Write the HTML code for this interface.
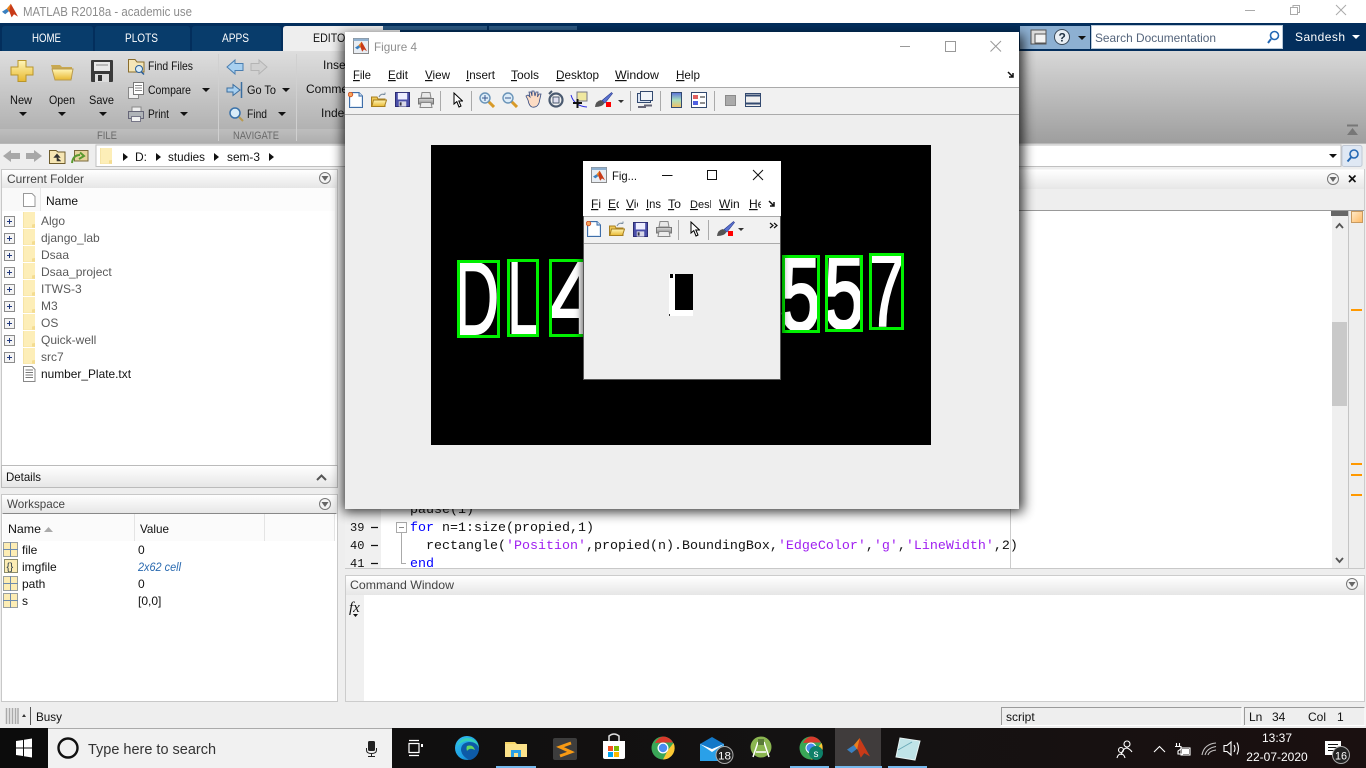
<!DOCTYPE html>
<html><head><meta charset="utf-8"><title>MATLAB R2018a</title>
<style>
html,body{margin:0;padding:0;width:1366px;height:768px;overflow:hidden;background:#eee}
svg{display:block}
text{font-family:"Liberation Sans",sans-serif;font-size:12px;fill:#111;white-space:pre}
.g{fill:#5a5a5a}.m{font-family:"Liberation Mono",monospace;font-size:13.33px}
.k{fill:#0000ff}.s{fill:#a020f0}.w{fill:#fff}
.u{text-decoration:underline}
.d{font-size:104px;fill:#fff;stroke:#fff;stroke-width:2}
</style></head><body>
<svg width="1366" height="768" viewBox="0 0 1366 768" xmlns="http://www.w3.org/2000/svg">
<defs>
<linearGradient id="rb" x1="0" y1="0" x2="0" y2="1"><stop offset="0" stop-color="#d8d8d8"/><stop offset="1" stop-color="#9e9e9e"/></linearGradient>
<linearGradient id="rl" x1="0" y1="0" x2="0" y2="1"><stop offset="0" stop-color="#dedede"/><stop offset="1" stop-color="#b2b2b2"/></linearGradient>
<linearGradient id="rs" x1="0" y1="0" x2="0" y2="1"><stop offset="0" stop-color="#bebebe"/><stop offset="1" stop-color="#aeaeae"/></linearGradient>
<linearGradient id="hd" x1="0" y1="0" x2="0" y2="1"><stop offset="0" stop-color="#fff"/><stop offset="1" stop-color="#e6e6e6"/></linearGradient>
<linearGradient id="tb" x1="0" y1="0" x2="1" y2="0"><stop offset="0" stop-color="#0c0c0c"/><stop offset=".6" stop-color="#141212"/><stop offset="1" stop-color="#1a1010"/></linearGradient>
<linearGradient id="yl" x1="0" y1="0" x2="0" y2="1"><stop offset="0" stop-color="#fff6b8"/><stop offset="1" stop-color="#e8b830"/></linearGradient>
<linearGradient id="or" x1="0" y1="0" x2="1" y2="1"><stop offset="0" stop-color="#ffeccc"/><stop offset="1" stop-color="#ffb860"/></linearGradient>
<linearGradient id="cb" x1="0" y1="0" x2="0" y2="1"><stop offset="0" stop-color="#5a70d8"/><stop offset=".5" stop-color="#a8e0c0"/><stop offset="1" stop-color="#f4c060"/></linearGradient>
<linearGradient id="ed" x1="0" y1="0" x2="1" y2="1"><stop offset="0" stop-color="#35c1f1"/><stop offset=".6" stop-color="#1b9de2"/><stop offset="1" stop-color="#0c59a4"/></linearGradient>
<linearGradient id="gp" x1="0" y1="0" x2="0" y2="1"><stop offset="0" stop-color="#d8d8d8"/><stop offset="1" stop-color="#8a8a8a"/></linearGradient>
<filter id="sh" x="-5%" y="-5%" width="110%" height="110%"><feGaussianBlur stdDeviation="6"/></filter>
<filter id="sh2" x="-10%" y="-10%" width="120%" height="120%"><feGaussianBlur stdDeviation="3.5"/></filter>

<symbol id="ml" viewBox="0 0 20 20"><polygon points="0,11 6,7 9,10 4,14" fill="#3a80c0"/><polygon points="6,7 11,1 13,6 9,11" fill="#e8801e"/><polygon points="11,1 15,8 20,17 15,14 12,18 9,10" fill="#c83a18"/></symbol>
<symbol id="fi" viewBox="0 0 16 16"><rect x=".5" y=".5" width="15" height="15" fill="#e8edf3" stroke="#8a8a8a"/><rect x=".5" y=".5" width="15" height="2.5" fill="#8fb0d0"/><use href="#ml" x="2" y="3" width="12" height="12"/></symbol>
<symbol id="pf" viewBox="0 0 12 16"><path d="M0 0H12V16H0Z" fill="#fdeeb8"/><path d="M9 16V12.5L12 12V16" fill="#f4dc90"/><path d="M.5 0V16H11.5" fill="none" stroke="#f6e4a6"/></symbol>
<symbol id="pl" viewBox="0 0 11 11"><rect x=".5" y=".5" width="10" height="10" fill="#f4f4f4" stroke="#8c8c8c"/><path d="M3 5.5H8M5.5 3V8" stroke="#223a80"/></symbol>
<symbol id="gd" viewBox="0 0 15 15"><rect x=".5" y=".5" width="14" height="14" fill="#fdedb4" stroke="#9aa0a0"/><path d="M7.5 0V15M0 7.5H15" stroke="#6e8cae"/></symbol>
<symbol id="pg" viewBox="0 0 16 16"><path d="M1.5 .5H11L14.5 4V15.5H1.5Z" fill="#dce9f7" stroke="#3f6ea8"/><path d="M3 2H10.500V5H13V14H3Z" fill="#fff"/><path d="M11 .5V4H14.5" fill="#cfe0f2" stroke="#3f6ea8"/><circle cx="2.5" cy="2.5" r="2.2" fill="#f5a55a" stroke="#d0552a"/></symbol>
<symbol id="op" viewBox="0 0 16 16"><path d="M.5 5H6L7 7H14V14.5H.5Z" fill="#eec755" stroke="#a77f20"/><path d="M.8 14.5L2.500 8H15.5L13.5 14.5Z" fill="url(#yl)" stroke="#a77f20"/><path d="M8 5Q10 1 14 2.500M14 2.500V.5M14 2.500H11.800" fill="none" stroke="#7a8ea0"/></symbol>
<symbol id="sv" viewBox="0 0 16 16"><rect x=".5" y=".5" width="15" height="15" fill="#4a4fa8" stroke="#2a2a70"/><rect x="3" y="1" width="10" height="7" fill="#eef"/><rect x="4" y="10" width="8" height="5.5" fill="#d8d8e8"/><rect x="5" y="11" width="2" height="3.5" fill="#334"/></symbol>
<symbol id="pr" viewBox="0 0 16 16"><path d="M4 .5H12L13 6H3Z" fill="#e8e8e8" stroke="#8a8a8a"/><path d="M.5 6.500H15.500V12H.5Z" fill="url(#gp)" stroke="#777"/><path d="M3 10.500H13L14 15.500H2Z" fill="#ececec" stroke="#888"/></symbol>
<symbol id="cu" viewBox="0 0 10 16"><path d="M1 1V12L3.8 9.6L6 15L8 14L5.8 9H9.5Z" fill="#fff" stroke="#000"/></symbol>
<symbol id="mg" viewBox="0 0 16 16"><path d="M9.5 9.5L15 15" stroke="#d89a28" stroke-width="3"/><circle cx="6" cy="6" r="5" fill="#dcecf8" stroke="#6a94b8" stroke-width="1.4"/></symbol>
<symbol id="br" viewBox="0 0 20 16"><path d="M8 8.500L17.500 .5L18.500 1.500L11 11Z" fill="#5a72d0" stroke="#28388a" stroke-width=".6"/><path d="M1 15Q1.500 9 7 8L10.500 11Q8.500 15 1 15Z" fill="#555"/><rect x="12" y="10" width="5" height="5" fill="#f00"/></symbol>
</defs>

<!-- background -->
<rect width="1366" height="768" fill="#eee"/>
<rect width="1366" height="23" fill="#fff"/>
<use href="#ml" x="2" y="3" width="16" height="16"/>
<text x="23" y="16" style="font-size:13px;fill:#8c8c8c" textLength="169" lengthAdjust="spacingAndGlyphs">MATLAB R2018a - academic use</text>
<path d="M1245 10.5H1255" stroke="#aaa"/><path d="M1290.5 7.5H1297.5V14.5H1290.5ZM1293 7.5V5.5H1299.5V12.5H1297.5" fill="none" stroke="#aaa"/><path d="M1336 5L1346 15M1346 5L1336 15" stroke="#aaa"/>

<!-- tab bar -->
<rect y="23" width="1366" height="28" fill="#032e5c"/>
<path d="M2 51V29Q2 26 5 26H90Q93 26 93 29V51Z" fill="#083c6b"/>
<path d="M95 51V29Q95 26 98 26H187Q190 26 190 29V51Z" fill="#083c6b"/>
<path d="M192 51V29Q192 26 195 26H278Q281 26 281 29V51Z" fill="#083c6b"/>
<path d="M283 51V29Q283 26 286 26H400V51Z" fill="#eee"/>
<path d="M383 26H487V30H383ZM489 26H577V30H489Z" fill="#2c5a84"/>
<text x="32" y="42" class="w" textLength="29" lengthAdjust="spacingAndGlyphs">HOME</text><text x="125" y="42" class="w" textLength="33" lengthAdjust="spacingAndGlyphs">PLOTS</text><text x="222" y="42" class="w" textLength="27" lengthAdjust="spacingAndGlyphs">APPS</text><text x="313" y="42" textLength="40" lengthAdjust="spacingAndGlyphs">EDITOR</text>
<rect x="1020" y="26" width="70" height="23" fill="#8db0d2"/>
<rect x="1031" y="30" width="15" height="14" fill="#ddd" stroke="#555"/><rect x="1035" y="34" width="11" height="9" fill="#f4f4f4" stroke="#555"/>
<circle cx="1062" cy="37" r="7.5" fill="#e8eef4" stroke="#3a4a5a"/><text x="1058.5" y="41.5" style="font-size:12px;font-weight:bold;fill:#234">?</text>
<polygon points="1078,36 1086,36 1082,40" fill="#111"/>
<rect x="1091.5" y="25.5" width="191" height="23" fill="#fff" stroke="#b8c8d8"/>
<text x="1095" y="42" style="fill:#55657c" textLength="121" lengthAdjust="spacingAndGlyphs">Search Documentation</text>
<circle cx="1274.5" cy="35.5" r="4" fill="none" stroke="#2468b4" stroke-width="1.6"/><path d="M1271 39L1268 43" stroke="#2468b4" stroke-width="2"/>
<text x="1295" y="41" class="w" textLength="50" lengthAdjust="spacing">Sandesh</text><polygon points="1352,35 1360,35 1356,39" fill="#fff"/>

<!-- ribbon -->
<rect y="51" width="1366" height="92" fill="url(#rb)"/>
<rect y="51" width="345" height="78" fill="url(#rl)"/>
<rect y="129" width="345" height="14" fill="url(#rs)"/>
<path d="M218.500 54V141M296.500 54V141" stroke="#d0d0d0"/>
<text x="97" y="139" style="font-size:11px;fill:#6a6a6a" textLength="20" lengthAdjust="spacingAndGlyphs">FILE</text><text x="233" y="139" style="font-size:11px;fill:#6a6a6a" textLength="46" lengthAdjust="spacingAndGlyphs">NAVIGATE</text>
<!-- new -->
<path d="M18 60.500H26V67H33V75H26V81.500H18V75H11V67H18Z" fill="url(#yl)" stroke="#b8952a"/>
<text x="10" y="104" textLength="22" lengthAdjust="spacingAndGlyphs">New</text><polygon points="19,112 27,112 23,116" fill="#111"/>
<!-- open -->
<path d="M51 65H60L62 67H72V79H55Z" fill="#c8a850"/><path d="M52 69H73L71 80H55Z" fill="url(#yl)" stroke="#b89a50"/>
<text x="49" y="104" textLength="26" lengthAdjust="spacingAndGlyphs">Open</text><polygon points="58,112 66,112 62,116" fill="#111"/>
<!-- save -->
<rect x="91" y="60" width="22" height="22" rx="1" fill="#3a3a3a"/><rect x="94" y="62" width="16" height="9" fill="#e8e8e8"/><path d="M96 65H108" stroke="#888"/><rect x="95" y="74" width="14" height="8" fill="#ddd"/><rect x="98" y="75" width="4" height="6" fill="#333"/>
<text x="89" y="104" textLength="25" lengthAdjust="spacingAndGlyphs">Save</text><polygon points="99,112 107,112 103,116" fill="#111"/>
<!-- find files -->
<path d="M128.500 59.500H135L137 62H144V72H128.500Z" fill="#f4e6b8" stroke="#8a6d2c"/><circle cx="139" cy="69" r="3.500" fill="#d8ecf8" stroke="#2a5e98"/><path d="M141.500 72L144 74.500" stroke="#2a5e98" stroke-width="1.500"/>
<text x="148" y="70" textLength="45" lengthAdjust="spacingAndGlyphs">Find Files</text>
<!-- compare -->
<rect x="128.500" y="87.500" width="10" height="11" fill="#f0f0f0" stroke="#888"/><rect x="133.500" y="82.500" width="10" height="12" fill="#fff" stroke="#777"/><path d="M135 85.500H142M135 88H142M135 90.500H142" stroke="#888"/>
<text x="148" y="94" textLength="43" lengthAdjust="spacingAndGlyphs">Compare</text><polygon points="202,88 210,88 206,92" fill="#111"/>
<!-- print -->
<rect x="132" y="107" width="9" height="5" fill="#eee" stroke="#888"/><rect x="128.500" y="111.500" width="15" height="7" fill="#b0b4b8" stroke="#667"/><rect x="131.500" y="116.500" width="9" height="5" fill="#f2f2f2" stroke="#778"/>
<text x="148" y="118" textLength="21" lengthAdjust="spacingAndGlyphs">Print</text><polygon points="180,112 188,112 184,116" fill="#111"/>
<!-- nav -->
<path d="M227 67L235 60V63.500H243V70.500H235V74Z" fill="#a8d0f0" stroke="#4a7eb0"/><path d="M267 67L259 60V63.500H251V70.500H259V74Z" fill="#d0d0d0" stroke="#b4b4b4"/>
<path d="M227 88H233V84.500L240 90L233 95.500V92H227Z" fill="#a8d0f0" stroke="#3a6ea0"/><path d="M241.500 82V98" fill="none" stroke="#3a6ea0" stroke-width="1.500"/>
<text x="247" y="94" textLength="29" lengthAdjust="spacingAndGlyphs">Go To</text><polygon points="282,88 290,88 286,92" fill="#111"/>
<circle cx="235" cy="113" r="5" fill="#d8ecf8" stroke="#3a72aa" stroke-width="1.500"/><path d="M239 117L243 121" stroke="#b89a50" stroke-width="2"/>
<text x="247" y="118" textLength="20" lengthAdjust="spacingAndGlyphs">Find</text><polygon points="278,112 286,112 282,116" fill="#111"/>
<text x="323" y="69">Insert</text><text x="306" y="93">Comment</text><text x="321" y="117">Indent</text>
<path d="M1347 125.500H1358" stroke="#777" stroke-width="2"/><polygon points="1347,135 1358,135 1352.500,128" fill="#777"/>

<!-- address bar -->
<rect y="143" width="1366" height="26" fill="#eee"/><path d="M0 143.500H1366" stroke="#b8b8b8"/>
<path d="M3 156L11 150V153H20V159H11V162Z" fill="#a8a8a8"/><path d="M42 156L34 150V153H26V159H34V162Z" fill="#a8a8a8"/>
<path d="M49.500 150.500H56L58 152H65V163.500H49.500Z" fill="#f6e6b4" stroke="#6e5c2c"/><path d="M57 154L54 157.500H60ZM57 157V161H61" fill="#333" stroke="#333" stroke-width=".6"/>
<path d="M74.500 150.500H88V161H74.500Z" fill="#e6d49c" stroke="#7a6a3c"/><path d="M72 163Q73 155 80 155M80 152.500L84 156L79 159" fill="none" stroke="#5a9a30" stroke-width="2"/>
<rect x="96" y="145" width="1245" height="21.500" fill="#fff" stroke="#c0c0c0"/>
<use href="#pf" x="100" y="148" width="12" height="16"/>
<polygon points="123,153 123,161 128,157" fill="#111"/><text x="135" y="161">D:</text>
<polygon points="156,153 156,161 161,157" fill="#111"/><text x="168" y="161" textLength="37" lengthAdjust="spacingAndGlyphs">studies</text>
<polygon points="214,153 214,161 219,157" fill="#111"/><text x="227" y="161" textLength="33" lengthAdjust="spacingAndGlyphs">sem-3</text>
<polygon points="269,153 269,161 274,157" fill="#111"/>
<polygon points="1329,154 1337,154 1333,158" fill="#111"/>
<rect x="1342" y="145.500" width="20" height="21" rx="2" fill="#dfe8f4" stroke="#c0c8d4"/><circle cx="1354" cy="154" r="4" fill="none" stroke="#2468b4" stroke-width="1.600"/><path d="M1351 157.500L1347.500 161.500" stroke="#2468b4" stroke-width="2"/>

<!-- current folder -->
<rect x="1.500" y="169.500" width="336" height="296" fill="#fff" stroke="#c8c8c8"/>
<rect x="2" y="170" width="335" height="18" fill="url(#hd)"/>
<text x="7" y="183" style="fill:#444" textLength="77" lengthAdjust="spacingAndGlyphs">Current Folder</text>
<circle cx="325" cy="178" r="5.500" fill="#f4f4f4" stroke="#777"/><polygon points="321.500,176 328.500,176 325,181" fill="#666"/>
<rect x="2" y="188" width="333" height="23" fill="#f9f9f9"/><rect x="40" y="188" width="295" height="23" fill="#fcfcfc"/><path d="M40.500 188V211" stroke="#e8e8e8"/>
<path d="M23.500 193.500H32L35 196.500V206.500H23.500Z" fill="#fff" stroke="#999"/>
<text x="46" y="205" textLength="32" lengthAdjust="spacingAndGlyphs">Name</text>
<rect x="335" y="188" width="2" height="278" fill="#eee"/>
<text x="41" y="225" class="g">Algo</text><text x="41" y="242" class="g">django_lab</text><text x="41" y="259" class="g">Dsaa</text><text x="41" y="276" class="g">Dsaa_project</text><text x="41" y="293" class="g">ITWS-3</text><text x="41" y="310" class="g">M3</text><text x="41" y="327" class="g">OS</text><text x="41" y="344" class="g">Quick-well</text><text x="41" y="361" class="g">src7</text>
<text x="41" y="378" textLength="90" lengthAdjust="spacingAndGlyphs">number_Plate.txt</text>
<use href="#pf" x="23" y="212" width="12" height="16"/><use href="#pf" x="23" y="229" width="12" height="16"/><use href="#pf" x="23" y="246" width="12" height="16"/><use href="#pf" x="23" y="263" width="12" height="16"/><use href="#pf" x="23" y="280" width="12" height="16"/><use href="#pf" x="23" y="297" width="12" height="16"/><use href="#pf" x="23" y="314" width="12" height="16"/><use href="#pf" x="23" y="331" width="12" height="16"/><use href="#pf" x="23" y="348" width="12" height="16"/>
<use href="#pl" x="4" y="216" width="11" height="11"/><use href="#pl" x="4" y="233" width="11" height="11"/><use href="#pl" x="4" y="250" width="11" height="11"/><use href="#pl" x="4" y="267" width="11" height="11"/><use href="#pl" x="4" y="284" width="11" height="11"/><use href="#pl" x="4" y="301" width="11" height="11"/><use href="#pl" x="4" y="318" width="11" height="11"/><use href="#pl" x="4" y="335" width="11" height="11"/><use href="#pl" x="4" y="352" width="11" height="11"/>
<path d="M23.500 366.500H32L35 369.500V381.500H23.500Z" fill="#fff" stroke="#888"/><path d="M25.500 370H33M25.500 372.500H33M25.500 375H33M25.500 377.500H33" stroke="#777"/>

<!-- details -->
<rect x="1.500" y="465.500" width="336" height="22" fill="url(#hd)" stroke="#bbb"/>
<text x="6" y="481" textLength="35" lengthAdjust="spacingAndGlyphs">Details</text><path d="M317 480L321.500 475.500L326 480" fill="none" stroke="#555" stroke-width="2"/>

<!-- workspace -->
<rect x="1.500" y="494.500" width="336" height="207" fill="#fff" stroke="#c8c8c8"/>
<rect x="2" y="495" width="335" height="18" fill="url(#hd)"/>
<text x="7" y="508" style="fill:#444" textLength="58" lengthAdjust="spacingAndGlyphs">Workspace</text>
<circle cx="325" cy="504" r="5.500" fill="#f4f4f4" stroke="#777"/><polygon points="321.500,502 328.500,502 325,507" fill="#666"/>
<path d="M2.500 513.500H336.500" stroke="#888"/>
<rect x="3" y="514" width="331" height="27" fill="#fbfbfb"/><path d="M134.500 514V541M264.500 514V541M334.500 514V541" stroke="#e4e4e4"/>
<text x="8" y="533" textLength="33" lengthAdjust="spacingAndGlyphs">Name</text><polygon points="44,532 53,532 48.500,527" fill="#aaa"/>
<text x="140" y="533" textLength="29" lengthAdjust="spacingAndGlyphs">Value</text>
<use href="#gd" x="3" y="542" width="15" height="15"/><use href="#gd" x="3" y="576" width="15" height="15"/><use href="#gd" x="3" y="593" width="15" height="15"/>
<rect x="4.500" y="559.500" width="13" height="13" fill="#fdedb4" stroke="#8a8a6a"/><text x="6.500" y="570" style="font-size:10px;fill:#234">{}</text>
<text x="22" y="554">file</text><text x="22" y="571">imgfile</text><text x="22" y="588">path</text><text x="22" y="605">s</text>
<text x="138" y="554">0</text><text x="138" y="571" style="font-style:italic;fill:#2a6ab0" textLength="43" lengthAdjust="spacingAndGlyphs">2x62 cell</text><text x="138" y="588">0</text><text x="138" y="605">[0,0]</text>

<!-- editor -->
<rect x="345" y="169.500" width="1019" height="20" fill="url(#hd)"/><rect x="345" y="189" width="1019" height="21" fill="#eee"/>
<path d="M345 210.500H1364" stroke="#999"/><path d="M1364.500 169V570" stroke="#ccc"/>
<circle cx="1333" cy="179" r="5.500" fill="#f4f4f4" stroke="#777"/><polygon points="1329.500,177 1336.500,177 1333,182" fill="#666"/>
<path d="M1349 175.500L1355.500 182M1355.500 175.500L1349 182" stroke="#111" stroke-width="1.600"/>
<rect x="345" y="211" width="1003" height="357" fill="#fff"/>
<rect x="345" y="211" width="36" height="357" fill="#f0f0f0"/>
<path d="M1010.500 211V568" stroke="#ccc"/>
<rect x="1332" y="211" width="16" height="357" fill="#efefef"/>
<rect x="1331" y="211" width="17" height="5" fill="#666"/>
<path d="M1336 228L1339.500 224L1343 228" fill="none" stroke="#555" stroke-width="1.800"/>
<path d="M1336 558L1339.500 562L1343 558" fill="none" stroke="#555" stroke-width="1.800"/>
<rect x="1332" y="322" width="15" height="84" fill="#c9c9c9"/>
<path d="M1348.500 211V568" stroke="#c4c4c4"/>
<rect x="1351.500" y="211.500" width="11" height="11" fill="url(#or)" stroke="#c89a60"/>
<path d="M1351 310H1362M1351 464H1362M1351 475H1362M1351 495H1362" stroke="#ff9900" stroke-width="2"/>
<text x="410" y="513" class="m">pause(1)</text>
<text x="350" y="531" class="m" style="font-size:12px">39</text><text x="350" y="549" class="m" style="font-size:12px">40</text><text x="350" y="567" class="m" style="font-size:12px">41</text>
<path d="M371 527.500H378M371 545.500H378M371 563.500H378" stroke="#111" stroke-width="1.200"/>
<rect x="396.500" y="522.500" width="10" height="10" fill="#fff" stroke="#aaa"/><path d="M399 527.500H404" stroke="#888"/><path d="M401.500 533V563.500H406" fill="none" stroke="#aaa"/>
<text x="410" y="531" class="m"><tspan class="k">for</tspan> n=1:size(propied,1)</text>
<text x="426" y="549" class="m">rectangle(<tspan class="s">'Position'</tspan>,propied(n).BoundingBox,<tspan class="s">'EdgeColor'</tspan>,<tspan class="s">'g'</tspan>,<tspan class="s">'LineWidth'</tspan>,2)</text>
<text x="410" y="567" class="m k">end</text>
<rect x="345" y="568" width="1020" height="7" fill="#eee"/><path d="M345 568.500H1365" stroke="#c8c8c8"/>

<!-- command window -->
<rect x="345.500" y="575.500" width="1019" height="126" fill="#fff" stroke="#ccc"/>
<rect x="346" y="576" width="1018" height="19" fill="url(#hd)"/>
<text x="350" y="589" style="fill:#444" textLength="104" lengthAdjust="spacingAndGlyphs">Command Window</text>
<circle cx="1352" cy="584" r="5.500" fill="#f4f4f4" stroke="#777"/><polygon points="1348.500,582 1355.500,582 1352,587" fill="#666"/>
<rect x="346" y="595" width="18" height="106" fill="#f0f0f0"/>
<text x="349" y="612" style="font-family:'Liberation Serif',serif;font-style:italic;font-size:15px">fx</text><polygon points="353,614 358,614 355.500,617" fill="#111"/>

<!-- status bar -->
<path d="M6.500 708V724M9.500 708V724M12.500 708V724M15.500 708V724M18 708V724" stroke="#aaa" stroke-width="1.500"/>
<polygon points="22,717 26,717 24,714" fill="#333"/><path d="M30.500 707V725" stroke="#555"/>
<text x="36" y="721" textLength="26" lengthAdjust="spacingAndGlyphs">Busy</text>
<path d="M1001.500 725V707.500H1241.500" fill="none" stroke="#9a9a9a"/><path d="M1001 725.500H1242V707" fill="none" stroke="#fff"/>
<text x="1006" y="721">script</text>
<path d="M1244.500 725V707.500H1364.500" fill="none" stroke="#9a9a9a"/><path d="M1244 725.500H1365V707" fill="none" stroke="#fff"/>
<text x="1249" y="721">Ln</text><text x="1272" y="721">34</text><text x="1308" y="721">Col</text><text x="1337" y="721">1</text>

<!-- figure 4 -->
<rect x="343" y="35" width="680" height="477" fill="#000" opacity=".8" filter="url(#sh)"/>
<rect x="345" y="32" width="674" height="477" fill="#eee"/>
<rect x="345" y="32" width="674" height="55" fill="#fff"/>
<use href="#fi" x="353" y="38" width="16" height="16"/>
<text x="374" y="51" style="fill:#8f8f8f" textLength="43" lengthAdjust="spacingAndGlyphs">Figure 4</text>
<path d="M900 46.500H910" stroke="#999"/><rect x="945.500" y="41.500" width="10" height="10" fill="none" stroke="#999"/><path d="M990.500 41L1001 51.500M1001 41L990.500 51.500" stroke="#999"/>
<text x="353" y="79" textLength="18" lengthAdjust="spacingAndGlyphs"><tspan class="u">F</tspan>ile</text>
<text x="388" y="79" textLength="20" lengthAdjust="spacingAndGlyphs"><tspan class="u">E</tspan>dit</text>
<text x="425" y="79" textLength="25" lengthAdjust="spacingAndGlyphs"><tspan class="u">V</tspan>iew</text>
<text x="466" y="79" textLength="29" lengthAdjust="spacingAndGlyphs"><tspan class="u">I</tspan>nsert</text>
<text x="511" y="79" textLength="28" lengthAdjust="spacingAndGlyphs"><tspan class="u">T</tspan>ools</text>
<text x="556" y="79" textLength="43" lengthAdjust="spacingAndGlyphs"><tspan class="u">D</tspan>esktop</text>
<text x="615" y="79" textLength="44" lengthAdjust="spacingAndGlyphs"><tspan class="u">W</tspan>indow</text>
<text x="676" y="79" textLength="24" lengthAdjust="spacingAndGlyphs"><tspan class="u">H</tspan>elp</text>
<path d="M1008 72L1013 77M1013 73V77H1009" fill="none" stroke="#111" stroke-width="1.500"/>
<rect x="345" y="87" width="674" height="28" fill="#f1f1f1"/>
<path d="M345 87.500H1019M345 114.500H1019" stroke="#aaa"/>
<use href="#pg" x="348" y="92" width="16" height="16"/><use href="#op" x="371" y="92" width="16" height="16"/><use href="#sv" x="395" y="92" width="15" height="15"/><use href="#pr" x="418" y="92" width="16" height="16"/>
<path d="M440.500 91V111M471.500 91V111M630.500 91V111M660.500 91V111M714.500 91V111" stroke="#aaa"/>
<use href="#cu" x="453" y="92" width="10" height="16"/>
<use href="#mg" x="479" y="92" width="16" height="16"/><path d="M482 98H488M485 95V101" stroke="#3a5a90"/>
<use href="#mg" x="502" y="92" width="16" height="16"/><path d="M505 98H511" stroke="#3a5a90"/>
<path d="M528 100L526 96L528 95L530 97L529 92H531L532 96V91H534L535 96L536 92H538L537.500 97L539 94H541L539 103Q537 108 532 107Q529 106 528 100Z" fill="#fcdcc4" stroke="#334a80" stroke-width=".8"/>
<circle cx="556" cy="100" r="6.500" fill="none" stroke="#4a5a70" stroke-width="2.200"/><rect x="553" y="97" width="6" height="6" fill="#e0e0f0" stroke="#4a5a70"/><path d="M549 94L552 91" stroke="#4a5a70" stroke-width="2"/>
<path d="M571 95Q574 106 587 107" fill="none" stroke="#2a2ae0"/><rect x="577" y="92" width="10" height="9" fill="#f0e8a0" stroke="#778"/><path d="M573 103H582M577.500 99V108" stroke="#111" stroke-width="2"/>
<use href="#br" x="594" y="92" width="20" height="16"/><polygon points="618,100 624,100 621,103" fill="#333"/>
<rect x="637.500" y="93.500" width="13" height="9" fill="#dde6f4" stroke="#334a70"/><rect x="640.500" y="91.500" width="12" height="9" fill="#f0f4fa" stroke="#334a70"/><path d="M638 107H646M644 105.500H652" stroke="#667" stroke-width="2"/>
<rect x="671.500" y="92.500" width="10" height="15" fill="url(#cb)" stroke="#334a70"/>
<rect x="691.500" y="92.500" width="15" height="15" fill="#fff" stroke="#334a70"/><rect x="693" y="95" width="5" height="4" fill="#e06060"/><rect x="693" y="101" width="5" height="4" fill="#5060e0"/><path d="M700 97H705M700 103H705" stroke="#222"/>
<rect x="725.500" y="95.500" width="10" height="10" fill="#aaa" stroke="#8a8a8a"/>
<rect x="745.500" y="93.500" width="15" height="13" fill="#f0f0f0" stroke="#334a70"/><path d="M746 95.500H760M746 103.500H760" stroke="#334a70" stroke-width="2"/>

<!-- plot -->
<rect x="431" y="145" width="500" height="300" fill="#000"/>
<text transform="translate(454,334) scale(.6,1)" class="d">D</text>
<text transform="translate(507.500,334) scale(.53,1)" class="d">L</text>
<text transform="translate(549,333) scale(.85,1)" class="d">4</text>
<text transform="translate(780,330) scale(.7,1)" class="d" style="stroke-width:3">5</text>
<text transform="translate(824,328) scale(.7,1)" class="d" style="stroke-width:3">5</text>
<text transform="translate(867.500,326) scale(.65,1)" class="d">7</text>
<g fill="none" stroke="#00f000" stroke-width="3">
<rect x="458.500" y="261.500" width="40" height="75"/><rect x="508.500" y="260.500" width="29" height="75"/><rect x="550.500" y="260.500" width="40" height="75"/>
<rect x="783.500" y="256.500" width="35" height="75"/><rect x="826.500" y="256.500" width="35" height="74"/><rect x="870.500" y="254.500" width="32" height="74"/>
</g>

<!-- small figure -->
<rect x="581" y="161" width="202" height="221" fill="#000" opacity=".55" filter="url(#sh2)"/>
<rect x="583" y="161" width="198" height="219" fill="#eee"/>
<path d="M583.500 216V379.500H780.500V216" fill="none" stroke="#555"/>
<rect x="583" y="161" width="198" height="55" fill="#fff"/>
<use href="#fi" x="591" y="167" width="16" height="16"/>
<text x="612" y="180" textLength="25" lengthAdjust="spacingAndGlyphs">Fig...</text>
<path d="M662 175.500H672.500" stroke="#111"/><rect x="707.500" y="170.500" width="9" height="9" fill="none" stroke="#111"/><path d="M753 170L763 180M763 170L753 180" stroke="#111"/>
<text x="591" y="208"><tspan class="u">F</tspan>i</text>
<svg x="608" y="195" width="11" height="18"><text x="0" y="13"><tspan class="u">E</tspan>dit</text></svg>
<svg x="626" y="195" width="12" height="18"><text x="0" y="13"><tspan class="u">V</tspan>iew</text></svg>
<text x="646" y="208" textLength="15" lengthAdjust="spacingAndGlyphs"><tspan class="u">I</tspan>ns</text>
<text x="668" y="208" textLength="13" lengthAdjust="spacingAndGlyphs"><tspan class="u">T</tspan>o</text>
<svg x="690" y="195" width="21" height="18"><text x="0" y="13" style="font-size:11px"><tspan class="u">D</tspan>eskt</text></svg>
<svg x="719" y="195" width="21" height="18"><text x="0" y="13"><tspan class="u">W</tspan>in</text></svg>
<svg x="749" y="195" width="12" height="18"><text x="0" y="13"><tspan class="u">H</tspan>elp</text></svg>
<path d="M769 201L774 206M774 202V206H770" fill="none" stroke="#111" stroke-width="1.500"/>
<rect x="584" y="216" width="196" height="27" fill="#f1f1f1"/>
<path d="M584 216.500H780M584 243.500H780" stroke="#aaa"/>
<use href="#pg" x="586" y="221" width="16" height="16"/><use href="#op" x="609" y="221" width="16" height="16"/><use href="#sv" x="633" y="222" width="15" height="15"/><use href="#pr" x="656" y="221" width="16" height="16"/>
<path d="M678.500 220V240M708.500 220V240" stroke="#aaa"/>
<use href="#cu" x="690" y="221" width="10" height="16"/>
<use href="#br" x="716" y="221" width="20" height="16"/><polygon points="738,228 744,228 741,231" fill="#333"/>
<path d="M770 223L773 225.500L770 228M774 223L777 225.500L774 228" fill="none" stroke="#111" stroke-width="1.200"/>
<rect x="669" y="274" width="24" height="42" fill="#fff"/><rect x="675" y="274" width="18" height="36" fill="#000"/><rect x="670" y="274" width="3" height="4" fill="#000"/><rect x="669" y="314" width="1" height="2" fill="#333"/>

<!-- taskbar -->
<rect y="728" width="1366" height="40" fill="url(#tb)"/>
<rect x="48" y="728" width="344" height="40" fill="#f1f1f1"/><path d="M48 728.500H392" stroke="#aaa"/>
<path d="M16 741L23 740V747.500H16ZM24 739.800L32 738.500V747.500H24ZM16 748.500H23V756L16 755ZM24 748.500H32V757.500L24 756.200Z" fill="#fff"/>
<circle cx="68" cy="748" r="9.500" fill="none" stroke="#111" stroke-width="2.400"/>
<text x="88" y="754" style="font-size:15px;fill:#333" textLength="128" lengthAdjust="spacingAndGlyphs">Type here to search</text>
<rect x="368" y="741" width="7" height="10" rx="1.500" fill="#222"/><path d="M366.500 748V750Q366.500 753.500 371.500 753.500Q376.500 753.500 376.500 750V748M371.500 753.500V756M368 756.500H375" fill="none" stroke="#222"/>
<path d="M409 743.500H419V752.500H409ZM409 740.500H419M409 755.500H419" fill="none" stroke="#fff" stroke-width="1.200"/><rect x="421" y="744" width="2" height="3" fill="#fff"/>
<!-- edge -->
<circle cx="467" cy="748" r="12" fill="url(#ed)"/><path d="M470 760A12 12 0 0 0 479 748Q477 742 469 742Q461 743 461 750Q462 757 470 760Z" fill="#0d5aa7"/><path d="M467 746Q473 744 475 750Q470 747 467 751Q466 748 467 746Z" fill="#63d860"/><path d="M467 738Q477 738 479 748Q476 741 467 741Q460 742 457 747Q460 738 467 738Z" fill="#36cfb8"/>
<!-- explorer -->
<path d="M505 742H515L517 744H527V757H505Z" fill="#f6d566"/><rect x="505" y="744" width="22" height="13" fill="#fbe28a"/><path d="M511 757V750H521V757H518V753H514V757Z" fill="#2aa0e4"/>
<rect x="496" y="766" width="40" height="2" fill="#76b9ed"/>
<!-- sublime -->
<rect x="553" y="738" width="24" height="22" rx="2" fill="#3d3d3d"/><path d="M571 743L560 747L571 752L560 756" fill="none" stroke="#f79a14" stroke-width="3"/>
<!-- store -->
<path d="M603 741H625V757Q625 759 623 759H605Q603 759 603 757Z" fill="#fff"/><path d="M609 741V736Q614 732 619 736V741" fill="none" stroke="#ddd" stroke-width="1.500"/>
<rect x="608" y="746" width="5" height="5" fill="#f25022"/><rect x="614" y="746" width="5" height="5" fill="#7fba00"/><rect x="608" y="752" width="5" height="5" fill="#00a4ef"/><rect x="614" y="752" width="5" height="5" fill="#ffb900"/>
<!-- chrome -->
<circle cx="663" cy="748" r="11.500" fill="#3aa757"/><path d="M663 736.500A11.500 11.500 0 0 1 673 742.500H663L655 743A11.500 11.500 0 0 1 663 736.500Z" fill="#d93a2c"/><path d="M673.500 743A11.500 11.500 0 0 1 663 759.500L668 750Z" fill="#fcc934"/><circle cx="663" cy="748" r="5.500" fill="#fff"/><circle cx="663" cy="748" r="4.200" fill="#4a8cf0"/>
<!-- mail -->
<rect x="700" y="744" width="24" height="17" fill="#2aa0e8"/><path d="M700 744L712 740L724 744L712 752Z" fill="#fff"/><path d="M700 744L712 737L724 744L712 749Z" fill="#1378c8"/>
<circle cx="724.500" cy="755" r="8.500" fill="#222" stroke="#aaa"/><text x="718" y="759.500" style="font-size:11px;fill:#fff" textLength="13" lengthAdjust="spacingAndGlyphs">18</text>
<!-- android -->
<circle cx="761" cy="747" r="10.500" fill="#8ab550"/><path d="M753 757L758 742M769 757L764 742M756 752H766" stroke="#fff" stroke-width="1.500" fill="none"/><path d="M758 739H764V745H758Z" fill="#5a7a38"/>
<!-- chrome s -->
<circle cx="811" cy="748" r="11.500" fill="#3aa757"/><path d="M811 736.500A11.500 11.500 0 0 1 821 742.500H811L803 743A11.500 11.500 0 0 1 811 736.500Z" fill="#d93a2c"/><path d="M821.500 743A11.500 11.500 0 0 1 811 759.500L816 750Z" fill="#fcc934"/><circle cx="811" cy="748" r="5" fill="#4a8cf0" stroke="#fff"/>
<circle cx="816" cy="753" r="7" fill="#0e8068"/><text x="813.500" y="757" style="font-size:10px;fill:#fff">s</text>
<rect x="790" y="766" width="39" height="2" fill="#76b9ed"/>
<!-- matlab -->
<rect x="835" y="728" width="46" height="40" fill="#403c3c"/>
<use href="#ml" x="847" y="737" width="23" height="23"/>
<rect x="835" y="766" width="47" height="2" fill="#76b9ed"/>
<!-- notepad -->
<path d="M900 738L920 741L915 760L896 757Z" fill="#c0e4e8" stroke="#e8f4f4" stroke-width="1"/><path d="M898 750L912 742" stroke="#6aaab8"/>
<rect x="888" y="766" width="39" height="2" fill="#76b9ed"/>
<!-- tray -->
<g fill="none" stroke="#fff" stroke-width="1.100">
<circle cx="1127" cy="744" r="3"/><path d="M1121 755Q1123 748 1127 748Q1130 749 1132 752"/><circle cx="1121" cy="750" r="2.500"/><path d="M1117 758Q1118 754 1121 754Q1124 754 1125 758"/>
<path d="M1154 752L1159.500 746.500L1165 752"/>
<path d="M1176.500 746V743M1179.500 746V743M1175 746.500H1181V749L1178 751V754H1183"/><rect x="1181" y="748" width="9" height="7"/>
<path d="M1202 755Q1204 744 1216 743M1205 755Q1207 748 1216 746.500M1208 755Q1209 751 1216 750" opacity=".75"/>
<path d="M1224 745.500H1227L1231 742V755L1227 751.500H1224ZM1234 745Q1236 748.500 1234 752M1237 742.500Q1240 748.500 1237 754.500"/>
</g>
<rect x="1182" y="749" width="7" height="5" fill="#fff"/>
<text x="1277" y="742" text-anchor="middle" class="w">13:37</text><text x="1277" y="761" text-anchor="middle" class="w">22-07-2020</text>
<rect x="1325" y="741" width="16" height="14" fill="#fff"/><path d="M1328 744.500H1338M1328 747.500H1338M1328 750.500H1338" stroke="#111"/>
<circle cx="1341" cy="755" r="8.500" fill="#222" stroke="#aaa"/><text x="1335" y="759.500" style="font-size:11px;fill:#fff" textLength="12" lengthAdjust="spacingAndGlyphs">16</text>
</svg>
</body></html>
